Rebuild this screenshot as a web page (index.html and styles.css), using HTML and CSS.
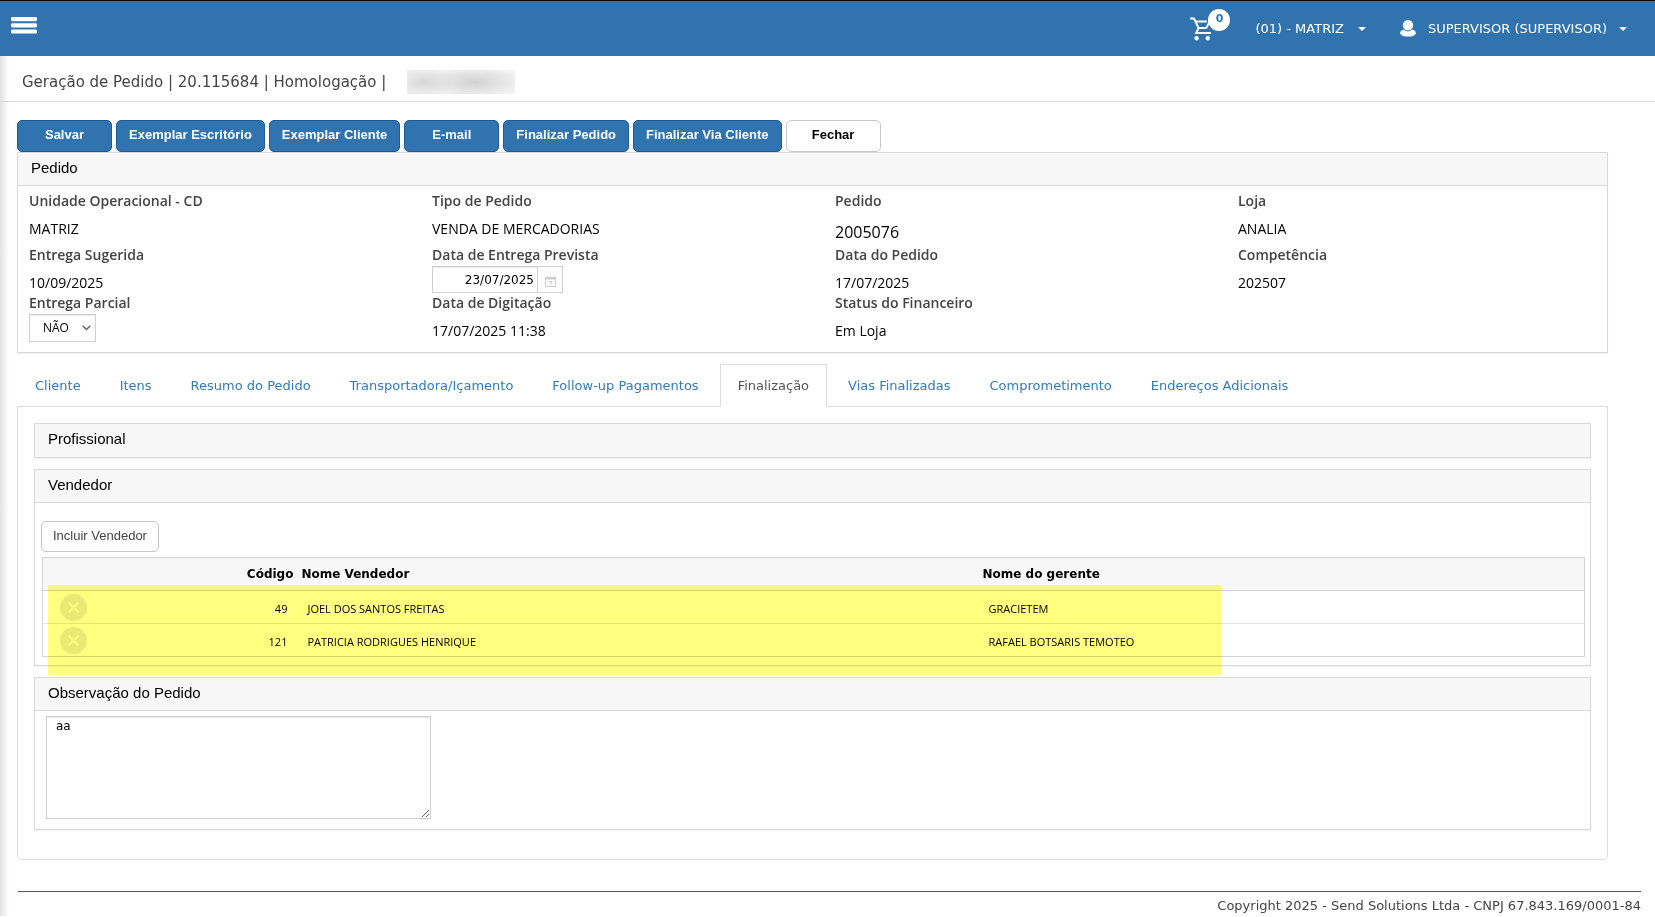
FILE: index.html
```html
<!DOCTYPE html>
<html lang="pt-BR">
<head>
<meta charset="utf-8">
<title>Geração de Pedido</title>
<link rel="stylesheet" href="styles.css">
</head>
<body>
<header class="topbar">
  <button class="menu-btn" type="button" aria-label="Menu">
    <svg width="28" height="20" viewBox="0 0 28 20" fill="#fff"><rect x="1" y="1" width="26" height="4.200" rx="1.400"/><rect x="1" y="7.200" width="26" height="4.200" rx="1.400"/><rect x="1" y="13.400" width="26" height="4.200" rx="1.400"/></svg>
  </button>
  <nav class="top-nav">
    <a class="cart" href="#" aria-label="Carrinho">
      <svg width="22" height="24" viewBox="0 0 22 24" fill="none" stroke="#fff" stroke-width="2"><path d="M0 1.5h4l4.6 9.6h7.6l4.6-8"/><path d="M5 4.5h12"/><path d="M8.6 11L6.2 15.9h14.6"/><circle cx="6.6" cy="21.2" r="2.2" fill="#fff" stroke="none"/><circle cx="17.8" cy="21.2" r="2.2" fill="#fff" stroke="none"/></svg>
      <span class="badge">0</span>
    </a>
    <a class="top-link unit" href="#">(01) - MATRIZ <i class="caret"></i></a>
    <a class="top-link user" href="#">
      <svg width="16" height="17" viewBox="0 0 16 17" fill="#fff"><ellipse cx="8" cy="5.2" rx="5.2" ry="5.2"/><path d="M3.6 9.400Q8 13.400 12.400 9.400Q16 10.600 16 13.400Q14 16.600 8 16.600T0 13.400Q0 10.600 3.600 9.400z"/></svg>
      <span>SUPERVISOR (SUPERVISOR)</span> <i class="caret"></i></a>
  </nav>
</header>
<div class="page">
  <div class="title-row"><h1>Geração de Pedido | 20.115684 | Homologação |</h1><span class="redacted"></span></div>
  <main class="content">
    <div class="actions">
      <button class="btn primary" type="button">Salvar</button>
      <button class="btn primary" type="button">Exemplar Escritório</button>
      <button class="btn primary" type="button">Exemplar Cliente</button>
      <button class="btn primary" type="button">E-mail</button>
      <button class="btn primary" type="button">Finalizar Pedido</button>
      <button class="btn primary" type="button">Finalizar Via Cliente</button>
      <button class="btn" type="button">Fechar</button>
    </div>
    <section class="panel">
      <h2 class="panel-head">Pedido</h2>
      <div class="fields">
        <div class="field"><span class="label">Unidade Operacional - CD</span><span class="value">MATRIZ</span></div>
        <div class="field"><span class="label">Tipo de Pedido</span><span class="value">VENDA DE MERCADORIAS</span></div>
        <div class="field"><span class="label">Pedido</span><span class="value big">2005076</span></div>
        <div class="field"><span class="label">Loja</span><span class="value">ANALIA</span></div>
        <div class="field"><span class="label">Entrega Sugerida</span><span class="value">10/09/2025</span></div>
        <div class="field"><label class="label" for="prevista">Data de Entrega Prevista</label>
          <div class="date"><input id="prevista" type="text" value="23/07/2025"><button type="button" aria-label="Abrir calendário"><svg width="11" height="11" viewBox="0 0 11 11"><path d="M.5 2.500h10v8H.5z" fill="none" stroke="#ccc"/><path d="M0 1h11v2.500H0z" fill="#ccc"/><path d="M2.500 0v1.500M5.500 0v1.500M8.500 0v1.500" stroke="#ddd"/><path d="M4 5.500h3L5.500 9" fill="none" stroke="#ccc"/></svg></button></div></div>
        <div class="field"><span class="label">Data do Pedido</span><span class="value">17/07/2025</span></div>
        <div class="field"><span class="label">Competência</span><span class="value">202507</span></div>
        <div class="field"><label class="label" for="parcial">Entrega Parcial</label>
          <div class="select"><select id="parcial"><option>NÃO</option><option>SIM</option></select><svg width="9" height="6" viewBox="0 0 9 6" fill="none" stroke="#666" stroke-width="1.5"><path d="M.7.8l3.8 3.7L8.3.8"/></svg></div></div>
        <div class="field"><span class="label">Data de Digitação</span><span class="value">17/07/2025 11:38</span></div>
        <div class="field"><span class="label">Status do Financeiro</span><span class="value">Em Loja</span></div>
      </div>
    </section>
    <nav class="tabs">
      <a href="#">Cliente</a><a href="#">Itens</a><a href="#">Resumo do Pedido</a><a href="#">Transportadora/Içamento</a><a href="#">Follow-up Pagamentos</a><a class="active" href="#">Finalização</a><a href="#">Vias Finalizadas</a><a href="#">Comprometimento</a><a href="#">Endereços Adicionais</a>
    </nav>
    <div class="tab-body">
      <section class="panel"><h2 class="panel-head closed">Profissional</h2></section>
      <section class="panel">
        <h2 class="panel-head">Vendedor</h2>
        <div class="seller-body">
          <button class="btn include" type="button">Incluir Vendedor</button>
          <div class="table-wrap">
            <table class="sellers">
              <thead><tr><th class="c-del"></th><th class="c-code">Código</th><th class="c-name">Nome Vendedor</th><th class="c-manager">Nome do gerente</th></tr></thead>
              <tbody>
                <tr><td><button class="del" type="button" aria-label="Excluir"><svg width="27" height="27" viewBox="0 0 27 27"><circle cx="13.5" cy="13.5" r="13.5" fill="#e9e9e9"/><path d="M8.500 8.500l10 10M18.500 8.500l-10 10" stroke="#fafafa" stroke-width="2.400"/></svg></button></td><td class="c-code">49</td><td>JOEL DOS SANTOS FREITAS</td><td>GRACIETEM</td></tr>
                <tr><td><button class="del" type="button" aria-label="Excluir"><svg width="27" height="27" viewBox="0 0 27 27"><circle cx="13.5" cy="13.5" r="13.5" fill="#e9e9e9"/><path d="M8.500 8.500l10 10M18.500 8.500l-10 10" stroke="#fafafa" stroke-width="2.400"/></svg></button></td><td class="c-code">121</td><td>PATRICIA RODRIGUES HENRIQUE</td><td>RAFAEL BOTSARIS TEMOTEO</td></tr>
              </tbody>
            </table>
            <div class="highlight"></div>
          </div>
        </div>
      </section>
      <section class="panel">
        <h2 class="panel-head"><label for="obs">Observação do Pedido</label></h2>
        <div class="obs-body"><textarea id="obs">aa</textarea></div>
      </section>
    </div>
  </main>
  <footer class="footer">Copyright 2025 - Send Solutions Ltda - CNPJ 67.843.169/0001-84</footer>
</div>
</body>
</html>
```
FILE: styles.css
```css
* { box-sizing: border-box; }
body {
  margin: 0;
  background: #fff;
  color: #000;
  font-family: "DejaVu Sans", Verdana, sans-serif;
  font-size: 12px;
}
button, input, select, textarea { font: inherit; color: inherit; }
a { text-decoration: none; }

.topbar {
  display: flex;
  justify-content: space-between;
  height: 56px;
  padding: 0 28px 0 10px;
  border-top: 1px solid #000b1c;
  background: #3173af;
}
.menu-btn {
  align-self: flex-start;
  margin-top: 15px;
  padding: 0;
  border: 0;
  background: none;
}
.menu-btn svg, .cart svg, .user svg, .del svg { display: block; }
.top-nav { display: flex; align-items: center; }
.cart { position: relative; margin-right: 43px; }
.badge {
  position: absolute;
  left: 18px;
  top: -8px;
  width: 22px;
  height: 22px;
  border-radius: 50%;
  background: #fff;
  color: #3173af;
  font-size: 11px;
  font-weight: bold;
  line-height: 20px;
  text-align: center;
}
.top-link {
  display: flex;
  align-items: center;
  gap: 12px;
  color: #fff;
  font-size: 13px;
}
.unit { gap: 14px; margin-right: 34px; }
.caret {
  border: 4px solid transparent;
  border-top-color: #fff;
  border-bottom: 0;
}

.page { background: linear-gradient(to right, #e3e3e3, #fff 9px); }
.title-row {
  display: flex;
  align-items: center;
  height: 46px;
  padding: 6px 0 0 22px;
  border-bottom: 1px solid #d9d9d9;
}
h1 {
  margin: 0;
  color: #444;
  font-size: 15px;
  font-weight: normal;
}
.redacted {
  width: 108px;
  height: 24px;
  margin-left: 21px;
  background:
    radial-gradient(ellipse 30px 16px at 16% 50%, #d8d8d8, transparent),
    radial-gradient(ellipse 48px 16px at 62% 50%, #d2d2d2, transparent),
    #f3f3f3;
}
.content { padding: 18px 47px 0 17px; }
.actions { display: flex; gap: 4px; }
.btn {
  min-width: 95px;
  height: 32px;
  padding: 0 12px 3px;
  border: 1px solid #c8c8c8;
  border-radius: 5px;
  background: #fff;
  font: bold 13px "Liberation Sans", Arial, sans-serif;
}
.primary { border-color: #1d5b96; background: #3173af; color: #fff; }

.panel {
  border: 1px solid #d9d9d9;
  background: #fff;
  box-shadow: 0 1px 1px rgba(0, 0, 0, .05);
}
.panel-head {
  height: 33px;
  margin: 0;
  padding: 0 13px 2px;
  border-bottom: 1px solid #d9d9d9;
  background: #f7f7f7;
  font: 15px/29px "Liberation Sans", Arial, sans-serif;
}
.closed { border-bottom: 0; }
.fields {
  display: grid;
  grid-template-columns: repeat(4, 1fr);
  column-gap: 34px;
  padding: 5px 0 10px 11px;
}
.field {
  display: flex;
  flex-direction: column;
  font: 14px/20px "Open Sans", "Noto Sans", sans-serif;
}
.label { color: #444; font-weight: 600; }
.value { margin-top: 8px; }
.big { font-size: 16px; font-weight: 500; line-height: 26px; }
.date { display: flex; height: 27px; margin-top: 1px; }
.date input {
  width: 106px;
  padding: 0 3px;
  border: 1px solid #d0d0d0;
  font: 12px "DejaVu Sans", sans-serif;
  text-align: right;
  box-shadow: inset 0 1px 1px rgba(0, 0, 0, .08);
}
.date button {
  width: 26px;
  margin-left: -1px;
  padding: 4px 0 0;
  border: 1px solid #d0d0d0;
  background: #fff;
}
.select { position: relative; width: 67px; margin-top: 1px; }
.select select {
  display: block;
  width: 100%;
  height: 28px;
  padding: 0 13px;
  border: 1px solid #d0d0d0;
  border-radius: 0;
  background: #fff;
  font-size: 12px;
  appearance: none;
  box-shadow: inset 0 1px 1px rgba(0, 0, 0, .08);
}
.select svg { position: absolute; right: 5px; top: 11px; pointer-events: none; }

.tabs {
  display: flex;
  gap: 3px;
  margin-top: 11px;
  border-bottom: 1px solid #ddd;
}
.tabs a {
  height: 43px;
  margin-bottom: -1px;
  padding: 0 17px;
  border: 1px solid transparent;
  color: #337ab7;
  font-size: 13px;
  line-height: 42px;
}
.tabs .active { border-color: #ddd #ddd #fff; background: #fff; color: #555; }
.tab-body {
  display: flex;
  flex-direction: column;
  gap: 11px;
  padding: 16px 16px 29px;
  border: 1px solid #ddd;
  border-top: 0;
  border-radius: 0 0 5px 5px;
  background: #fff;
}
.seller-body { padding: 18px 5px 8px 6px; }
.include { height: 31px; padding: 0 11px 3px; color: #444; font-weight: normal; }
.table-wrap { position: relative; margin: 5px 0 0 1px; }
.sellers {
  width: 100%;
  border: 1px solid #d4d4d4;
  border-collapse: collapse;
  table-layout: fixed;
}
.sellers tr { height: 33px; border-bottom: 1px solid #e4e4e4; }
.sellers thead tr { border-color: #d4d4d4; background: #f7f7f7; }
.sellers tbody tr:last-child { border-color: #d4d4d4; }
.sellers th {
  padding: 0 4px;
  font: bold 12px "DejaVu Sans", Verdana, sans-serif;
  text-align: left;
}
.sellers td {
  padding: 3px 10px 0;
  font: 11px "Open Sans", "Noto Sans", sans-serif;
}
.sellers td:first-child { padding: 0 0 0 17px; }
.c-del { width: 7%; }
.sellers .c-code { width: 147px; text-align: right; }
.c-manager { width: 606px; }
.del { display: block; padding: 0; border: 0; background: none; }
.highlight {
  position: absolute;
  left: 6px;
  top: 28px;
  width: 76%;
  height: 90px;
  background: #ffff80;
  mix-blend-mode: multiply;
}
.obs-body { padding: 5px 11px 10px; }
textarea {
  display: block;
  width: 385px;
  height: 103px;
  padding: 2px 9px;
  border: 1px solid #d0d0d0;
  font: 12px "DejaVu Sans", sans-serif;
  box-shadow: inset 0 1px 1px rgba(0, 0, 0, .08);
}
.footer {
  margin: 31px 14px 0 18px;
  padding-top: 4px;
  border-top: 1px solid #555;
  color: #444;
  font-size: 13px;
  line-height: 20px;
  text-align: right;
}
```
